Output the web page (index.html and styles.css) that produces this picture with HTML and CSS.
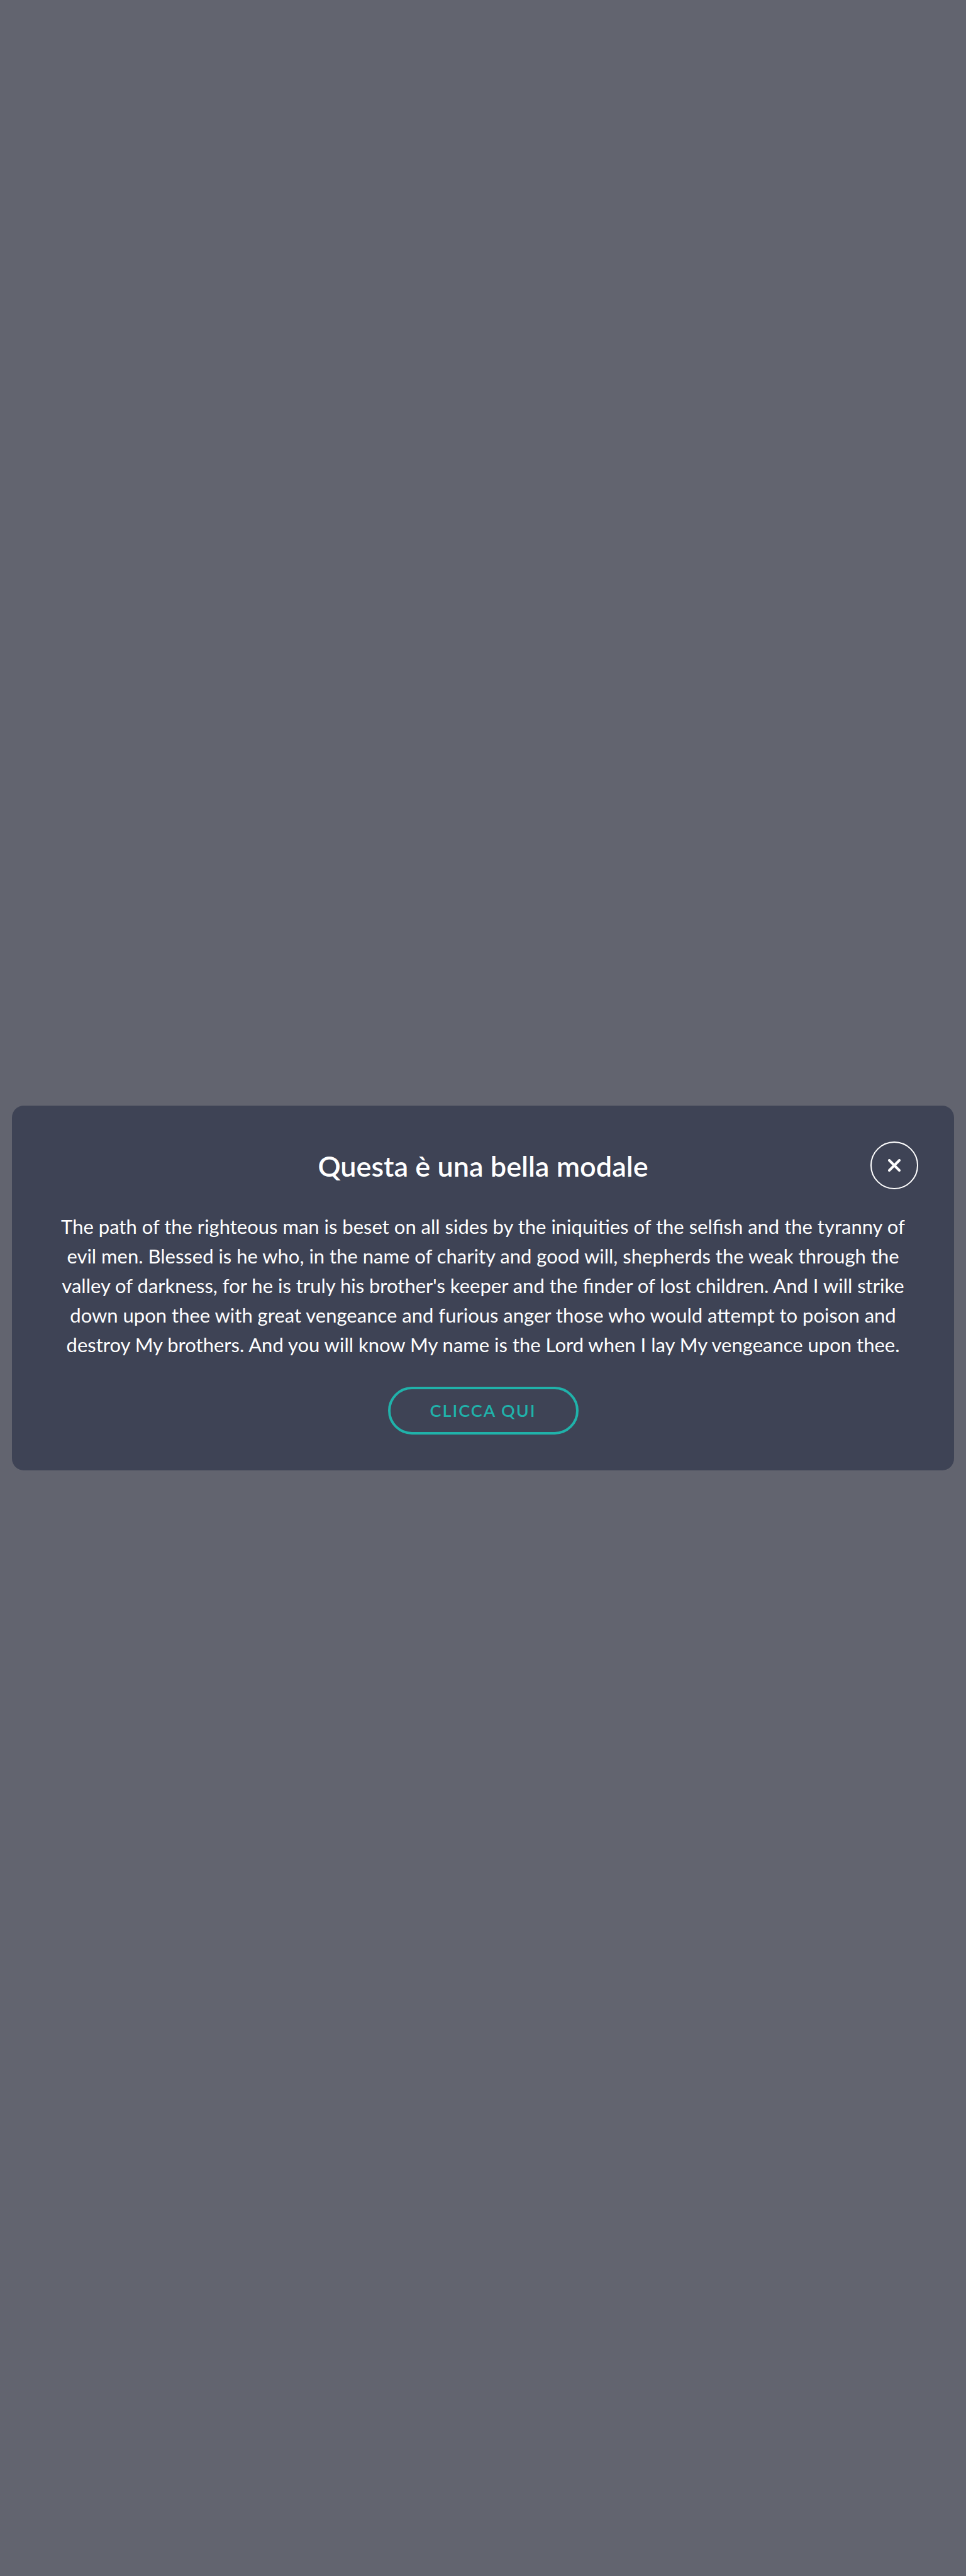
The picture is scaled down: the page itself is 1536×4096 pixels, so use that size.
FILE: index.html
```html
<!DOCTYPE html>
<html lang="it">
<head>
<meta charset="utf-8">
<meta name="viewport" content="width=device-width, initial-scale=1">
<title>Questa è una bella modale</title>
<link rel="stylesheet" href="styles.css">
</head>
<body class="overlay">
<section class="modal" role="dialog" aria-modal="true" aria-labelledby="modal-title">
  <button class="modal-close" type="button" aria-label="Chiudi">
    <svg class="modal-close-icon" viewBox="0 0 20 20" aria-hidden="true"><path d="M2 2L18 18M18 2L2 18"/></svg>
  </button>
  <h1 class="modal-title" id="modal-title">Questa è una bella modale</h1>
  <p class="modal-text">The path of the righteous man is beset on all sides by the iniquities of the selfish and the tyranny of evil men. Blessed is he who, in the name of charity and good will, shepherds the weak through the valley of darkness, for he is truly his brother's keeper and the finder of lost children. And I will strike down upon thee with great vengeance and furious anger those who would attempt to poison and destroy My brothers. And you will know My name is the Lord when I lay My vengeance upon thee.</p>
  <button class="modal-action" type="button">Clicca qui</button>
</section>
</body>
</html>
```
FILE: styles.css
```css
* {
  box-sizing: border-box;
}

.overlay {
  display: flex;
  align-items: center;
  min-height: 100vh;
  margin: 0;
  padding: 19px;
  background: #62646f;
  color: #fff;
  font-family: Lato, "Open Sans", sans-serif;
}

.modal {
  position: relative;
  display: flex;
  flex-direction: column;
  align-items: center;
  flex: 1;
  padding: 68px 76px 57px;
  border-radius: 19px;
  background: #3e4355;
  text-align: center;
}

.modal-title {
  margin: 0 0 44px;
  font-size: 45px;
  font-weight: 600;
  line-height: 57px;
}

.modal-text {
  margin: 0 0 43px;
  font-size: 31px;
  font-weight: 400;
  line-height: 47px;
}

/* Sits over the top right corner of the dialog */
.modal-close {
  position: absolute;
  top: 57px;
  right: 57px;
  display: flex;
  align-items: center;
  justify-content: center;
  width: 76px;
  height: 76px;
  padding: 0;
  border: 2px solid #fff;
  border-radius: 50%;
  background: none;
  cursor: pointer;
}

.modal-close-icon {
  width: 20px;
  height: 20px;
  fill: none;
  stroke: #fff;
  stroke-width: 4;
  stroke-linecap: round;
}

.modal-action {
  height: 76px;
  padding: 0 63px;
  border: 4px solid #20b2aa;
  border-radius: 38px;
  background: none;
  color: #20b2aa;
  font: 600 27px/68px Lato, "Open Sans", sans-serif;
  letter-spacing: 2px;
  text-transform: uppercase;
  cursor: pointer;
}
```
